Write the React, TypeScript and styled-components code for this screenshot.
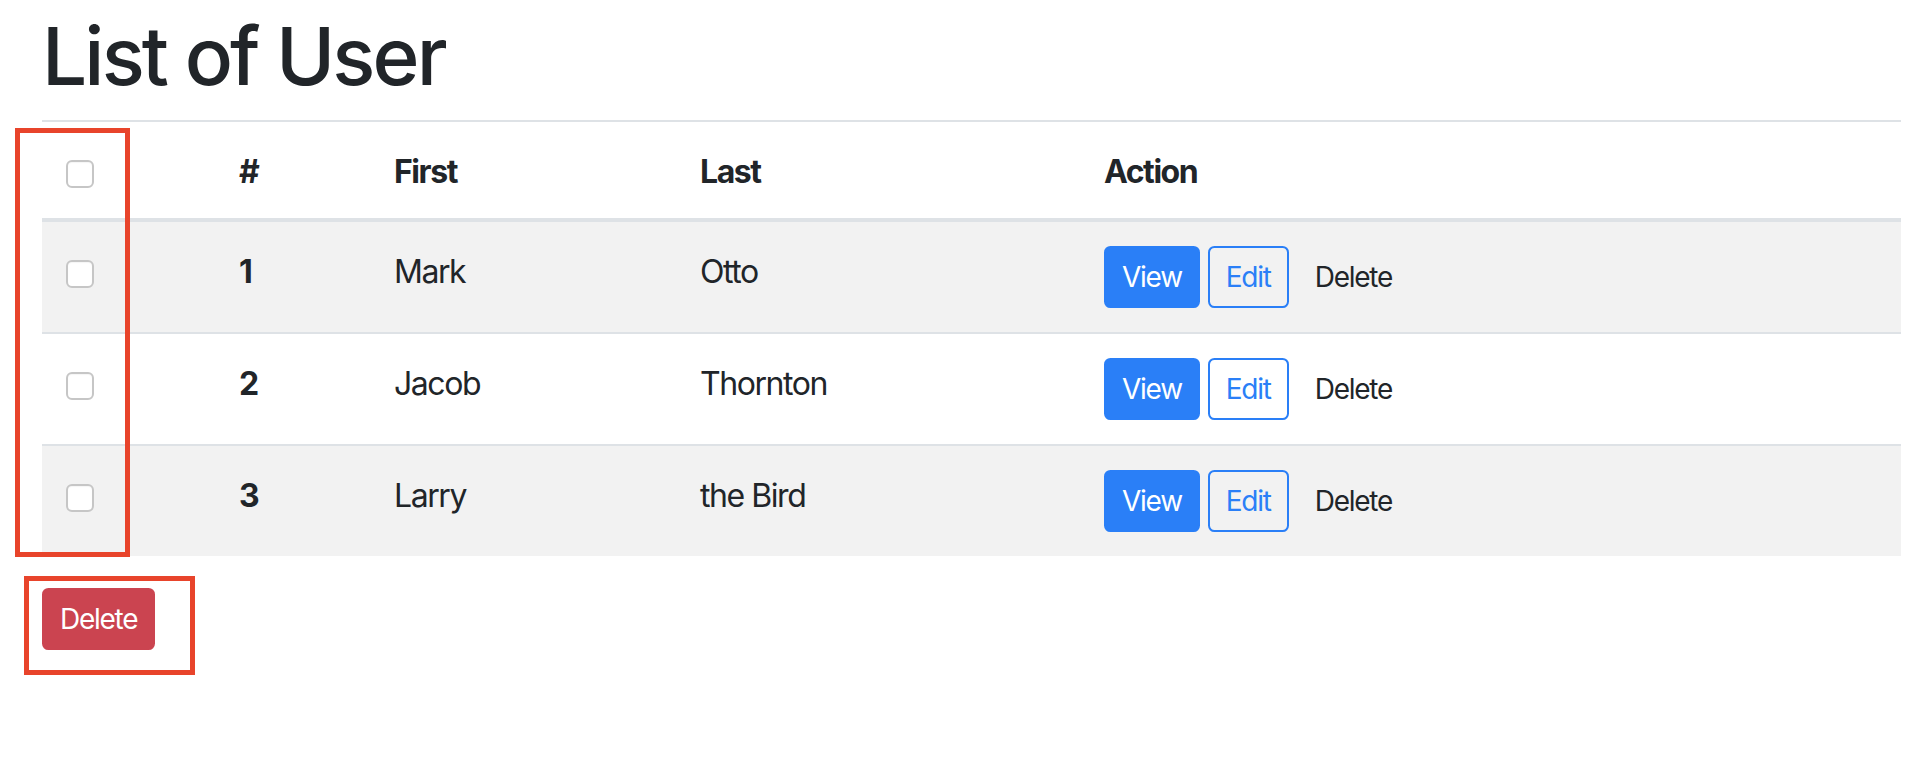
import React from "react";
import styled, { createGlobalStyle } from "styled-components";

const GlobalStyle = createGlobalStyle`
  html, body {
    margin: 0;
    padding: 0;
    background: #ffffff;
  }
  body {
    font-family: Inter, "Noto Sans", "Liberation Sans", sans-serif;
    color: #212529;
    font-size: 32px;
    letter-spacing: -0.045em;
  }
  * { box-sizing: border-box; }
`;

const Page = styled.div`
  position: relative;
  padding: 8px 31px 0 42px;
  min-height: 772px;
`;

const Title = styled.h1`
  margin: 0 0 16px;
  font-size: 80px;
  font-weight: 500;
  line-height: 96px;
  letter-spacing: -0.036em;
`;

const Table = styled.table`
  width: 100%;
  border-collapse: collapse;
  table-layout: fixed;
`;

const HeadCell = styled.th`
  text-align: left;
  font-weight: 700;
  padding: 26px 24px 22px;
  line-height: 48px;
  vertical-align: bottom;
  border-top: 2px solid #dee2e6;
  border-bottom: 4px solid #dee2e6;
`;

const Row = styled.tr<{ $striped?: boolean }>`
  background: ${(p) => (p.$striped ? "#f2f2f2" : "transparent")};
`;

const Cell = styled.td<{ $bold?: boolean; $tight?: boolean }>`
  padding: ${(p) => (p.$tight ? "24px" : "26px 24px 22px")};
  line-height: 48px;
  vertical-align: top;
  border-top: 2px solid #dee2e6;
  font-weight: ${(p) => (p.$bold ? 700 : 400)};
`;

const Check = styled.input.attrs({ type: "checkbox" })`
  appearance: none;
  -webkit-appearance: none;
  display: block;
  width: 28px;
  height: 28px;
  margin: 12px 0 8px;
  border: 2px solid #c6c6c6;
  border-radius: 6px;
  background: #ffffff;
  box-shadow: inset 0 1px 1px rgba(0, 0, 0, 0.04);
`;

const Actions = styled.div`
  display: flex;
  align-items: center;
  gap: 8px;
`;

const Button = styled.button<{ $variant: "primary" | "outline" | "plain" | "danger" }>`
  font-family: inherit;
  font-size: 28px;
  letter-spacing: -0.045em;
  line-height: 42px;
  padding: 8px 16px;
  border-radius: 6.4px;
  border: 2px solid transparent;
  cursor: pointer;
  ${(p) =>
    p.$variant === "primary"
      ? `background: #2a7ff7; border-color: #2a7ff7; color: #ffffff;`
      : p.$variant === "outline"
      ? `background: transparent; border-color: #2a7ff7; color: #2a7ff7;`
      : p.$variant === "danger"
      ? `background: #cb4450; border-color: #cb4450; color: #ffffff;`
      : `background: transparent; color: #212529;`}
`;

const Footer = styled.div`
  margin-top: 32px;
`;

const Marker = styled.div<{ $left: number; $top: number; $w: number; $h: number }>`
  position: absolute;
  left: ${(p) => p.$left}px;
  top: ${(p) => p.$top}px;
  width: ${(p) => p.$w}px;
  height: ${(p) => p.$h}px;
  border: 5px solid #e8442b;
  pointer-events: none;
`;

const users = [
  { id: 1, first: "Mark", last: "Otto" },
  { id: 2, first: "Jacob", last: "Thornton" },
  { id: 3, first: "Larry", last: "the Bird" },
];

export default function App() {
  return (
    <>
      <GlobalStyle />
      <Page>
        <Title>List of User</Title>
        <Table>
          <colgroup>
            <col style={{ width: 173 }} />
            <col style={{ width: 155 }} />
            <col style={{ width: 306 }} />
            <col style={{ width: 404 }} />
            <col />
          </colgroup>
          <thead>
            <tr>
              <HeadCell>
                <Check />
              </HeadCell>
              <HeadCell>#</HeadCell>
              <HeadCell>First</HeadCell>
              <HeadCell>Last</HeadCell>
              <HeadCell>Action</HeadCell>
            </tr>
          </thead>
          <tbody>
            {users.map((u, i) => (
              <Row key={u.id} $striped={i % 2 === 0}>
                <Cell>
                  <Check />
                </Cell>
                <Cell $bold>{u.id}</Cell>
                <Cell>{u.first}</Cell>
                <Cell>{u.last}</Cell>
                <Cell $tight>
                  <Actions>
                    <Button $variant="primary">View</Button>
                    <Button $variant="outline">Edit</Button>
                    <Button $variant="plain">Delete</Button>
                  </Actions>
                </Cell>
              </Row>
            ))}
          </tbody>
        </Table>
        <Footer>
          <Button $variant="danger">Delete</Button>
        </Footer>
        <Marker $left={15} $top={128} $w={115} $h={429} />
        <Marker $left={24} $top={576} $w={171} $h={99} />
      </Page>
    </>
  );
}
